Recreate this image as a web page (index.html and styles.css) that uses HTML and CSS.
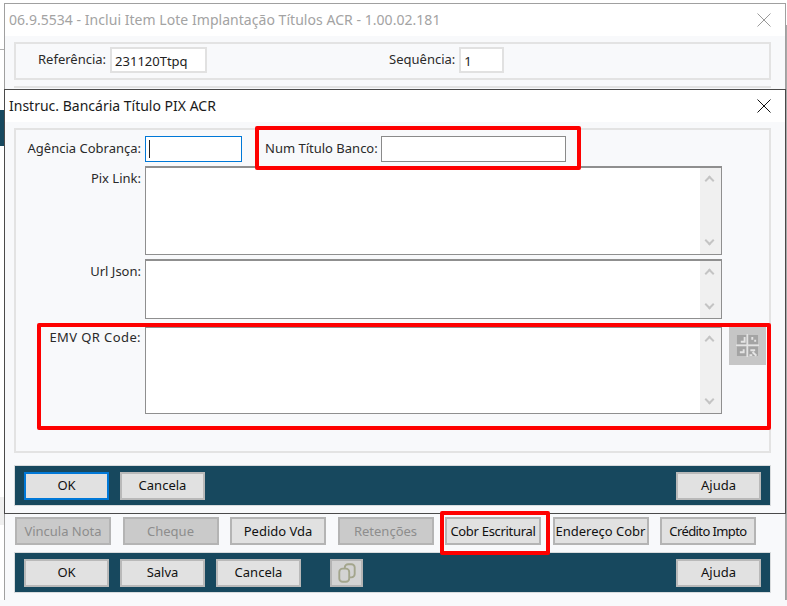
FILE: index.html
```html
<!DOCTYPE html>
<html lang="pt-BR">
<head>
<meta charset="utf-8">
<title>Instruc. Bancária Título PIX ACR</title>
<link rel="stylesheet" href="styles.css">
</head>
<body>
<div class="backdrop backdrop-line"></div>
<div class="backdrop backdrop-strip"></div>
<div class="backdrop backdrop-band"></div>
<div class="backdrop backdrop-right"></div>
<div class="backdrop backdrop-foot"></div>
<section class="window window-main">
  <header class="titlebar">
    <span class="title title-dim">06.9.5534 - Inclui Item Lote Implantação Títulos ACR - 1.00.02.181</span>
    <svg class="close close-dim" viewBox="0 0 14 14"><path d="M.5.5l13 13M13.5.5l-13 13"/></svg>
  </header>
  <div class="window-body">
    <div class="group group-ref">
      <label class="lbl lbl-ref">Referência:</label>
      <span class="input input-ref">231120Ttpq</span>
      <label class="lbl lbl-seq">Sequência:</label>
      <span class="input input-seq">1</span>
    </div>
    <div class="under-dialog"></div>
    <div class="btn-row">
      <button class="btn off">Vincula Nota</button>
      <button class="btn off">Cheque</button>
      <button class="btn">Pedido Vda</button>
      <button class="btn off">Retenções</button>
      <button class="btn tight">Cobr Escritural</button>
      <button class="btn">Endereço Cobr</button>
      <button class="btn tighter">Crédito Impto</button>
    </div>
    <div class="bar">
      <button class="btn wide">OK</button>
      <button class="btn wide">Salva</button>
      <button class="btn wide">Cancela</button>
      <button class="btn icon-btn" aria-label="Copiar">
        <svg viewBox="0 0 20 20"><g fill="none" stroke="#a3a58c" stroke-width="1.7"><rect x="8" y="2" width="9" height="12" rx="3"/><rect x="3" y="6" width="9" height="12" rx="3" fill="#d3d3d3"/></g></svg>
      </button>
      <button class="btn wide push">Ajuda</button>
    </div>
  </div>
</section>

<section class="window window-dialog">
  <header class="titlebar">
    <span class="title">Instruc. Bancária Título PIX ACR</span>
    <svg class="close" viewBox="0 0 14 14"><path d="M.5.5l13 13M13.5.5l-13 13"/></svg>
  </header>
  <div class="window-body">
    <div class="group group-form">
      <div class="row row-top">
        <label class="lbl lbl-col">Agência Cobrança:</label>
        <span class="input input-focus"><i class="caret"></i></span>
        <label class="lbl lbl-num">Num Título Banco:</label>
        <span class="input input-num"></span>
      </div>
      <div class="row row-area">
        <label class="lbl lbl-col">Pix Link:</label>
        <div class="area area-pix"><div class="scroll"><b class="up"></b><b class="down"></b></div></div>
      </div>
      <div class="row row-area">
        <label class="lbl lbl-col">Url Json:</label>
        <div class="area area-url"><div class="scroll"><b class="up"></b><b class="down"></b></div></div>
      </div>
      <div class="row row-area row-emv">
        <label class="lbl lbl-col">EMV QR Code:</label>
        <div class="area area-emv"><div class="scroll"><b class="up"></b><b class="down"></b></div></div>
        <button class="qr-btn" aria-label="QR Code">
          <svg viewBox="0 0 24 24"><path fill="#a4a4a4" d="M1 1h10v10H1zM13 1h10v10H13zM1 13h10v10H1zM13 13h10v10H13z"/><path fill="#e4e4e4" d="M5 7h3V3h2v6H5zM16 3h2v3h-2zM19 6h2v2h-2zM0 11h24v1.500H0zM11 0h1.500v24H11zM4 18h3v-2h2v4H4zM15 16h5v2h-5zM18 18l4 4-1.500 1.500-4-4zM14 21h3v2h-3z"/></svg>
        </button>
      </div>
    </div>
    <div class="bar bar-dialog">
      <button class="btn wide btn-default">OK</button>
      <button class="btn wide">Cancela</button>
      <button class="btn wide push">Ajuda</button>
    </div>
  </div>
</section>

<div class="mark mark-num"></div>
<div class="mark mark-emv"></div>
<div class="mark mark-cobr"></div>
</body>
</html>
```
FILE: styles.css
```css
* { box-sizing: border-box; }
html, body { margin: 0; width: 787px; height: 606px; overflow: hidden; background: #fff; }
body { position: relative; font: 14px/20px "Noto Sans", "Liberation Sans", sans-serif; color: #222; }

.backdrop { position: absolute; }
.backdrop-line { left: 0; top: 49px; width: 4px; height: 1px; background: #b0b0b0; }
.backdrop-strip { left: 0; top: 110px; width: 4px; height: 36px; background: #17485e; }
.backdrop-band { left: 0; top: 497px; width: 4px; height: 28px; background: #efefef; }
.backdrop-right { left: 786px; top: 25px; width: 1px; height: 575px; background: #a8a8a8; }
.backdrop-foot { left: 0; top: 600px; width: 787px; height: 6px; background: #f8f9fb; }

.window { position: absolute; left: 4px; width: 782px; display: flex; flex-direction: column; }
.window-main { top: 3px; height: 597px; border: 1px solid #a0a0a0; border-bottom: 0; background: #f8f9fb; }
.window-dialog { top: 89px; height: 425px; border: 1px solid #4a4a4a; background: #f8f9fb; }

.titlebar { height: 32px; background: #fff; display: flex; align-items: center; justify-content: space-between; padding: 0 14px 0 4px; flex: none; }
.title { font-size: 14px; white-space: nowrap; color: #1a1a1a; }
.title-dim { color: #a3a3a3; letter-spacing: .04px; }
.close { width: 14px; height: 14px; fill: none; stroke: #111; stroke-width: 1; }
.close-dim { stroke: #9a9a9a; }

.window-body { flex: 1; display: flex; flex-direction: column; padding: 6px 14px 0 9px; }

.group { border: 2px solid #e3e3e3; flex: none; }
.group-ref { height: 38px; padding-top: 3px; display: flex; align-items: flex-start; }
.under-dialog { height: 431px; margin-top: 6px; flex: none; border-top: 2px solid #e3e3e3; }
.group-form { height: 325px; padding: 6px 0 0; display: flex; flex-direction: column; }

.lbl { font-size: 13px; line-height: 18px; white-space: nowrap; color: #2a2a2a; padding-top: 3px; }
.lbl-ref { margin-left: 22px; }
.lbl-seq { margin-left: 182px; }

.input { display: block; height: 26px; background: #fff; border: 2px solid #e1e1e1; font-size: 13px; line-height: 24px; padding-left: 3px; flex: none; color: #222; margin-left: 4px; }
.input-ref { width: 97px; }
.input-seq { width: 45px; }

.row { display: flex; align-items: flex-start; }
.lbl-col { width: 125px; text-align: right; flex: none; }
.row-top { height: 30px; }
.input-focus { width: 97px; border: 1px solid #0078d7; position: relative; }
.caret { position: absolute; left: 3px; top: 3px; width: 1px; height: 18px; background: #222; }
.lbl-num { margin-left: 23px; }
.input-num { width: 185px; border: 1px solid #8a8a8a; margin-left: 3px; }

.row-area { margin-bottom: 4px; }
.area { width: 577px; margin-left: 4px; background: #fff; border: 1px solid #8f8f8f; border-top-width: 2px; display: flex; justify-content: flex-end; flex: none; }
.area-pix { height: 89px; }
.area-url { height: 60px; }
.area-emv { height: 88px; margin-top: 3px; }
.row-emv .lbl-col { padding-top: 5px; letter-spacing: .4px; }

.scroll { width: 21px; background: #f0f0f0; position: relative; }
.scroll b { position: absolute; left: 6px; width: 7px; height: 7px; border: solid #c4c4c4; border-width: 2px 0 0 2px; }
.up { top: 9px; transform: rotate(45deg); }
.down { bottom: 10px; transform: rotate(225deg); }

.qr-btn { width: 37px; height: 39px; margin: 3px 0 0 7px; padding: 0; border: 0; background: #c6c6c6; display: flex; align-items: center; justify-content: center; }
.qr-btn svg { width: 23px; height: 23px; }

.bar { height: 41px; margin-top: 7px; padding: 0 9px; gap: 11px; background: #17485e; border: 1px solid #d8dbdd; display: flex; align-items: center; flex: none; }
.bar-dialog { margin-top: 12px; }
.bar .icon-btn { margin-left: 18px; }

.btn { width: 96px; height: 28px; padding: 0 0 1px; border: 2px solid #b4b4b4; background: #e1e1e1; font: 13px/20px "Noto Sans", "Liberation Sans", sans-serif; color: #111; white-space: nowrap; overflow: hidden; flex: none; }
.wide { width: 85px; border-color: #b9b9b9; }
.push { margin-left: auto; }
.btn-default { border-color: #0078d7; }
.off { background: #cacaca; color: #8d8d8d; }
.tight { letter-spacing: -.3px; }
.tighter { letter-spacing: -.6px; }
.icon-btn { width: 33px; padding: 0; background: #d3d3d3; display: flex; align-items: center; justify-content: center; }
.icon-btn svg { width: 22px; height: 22px; }

.btn-row { display: flex; gap: 11.5px; margin-left: 1px; height: 28px; flex: none; }

.mark { position: absolute; border: 4px solid #fe0000; border-radius: 2px; }
.mark-num { left: 255px; top: 126px; width: 326px; height: 44px; }
.mark-emv { left: 37px; top: 323px; width: 734px; height: 107px; }
.mark-cobr { left: 440px; top: 511px; width: 110px; height: 44px; }
```
